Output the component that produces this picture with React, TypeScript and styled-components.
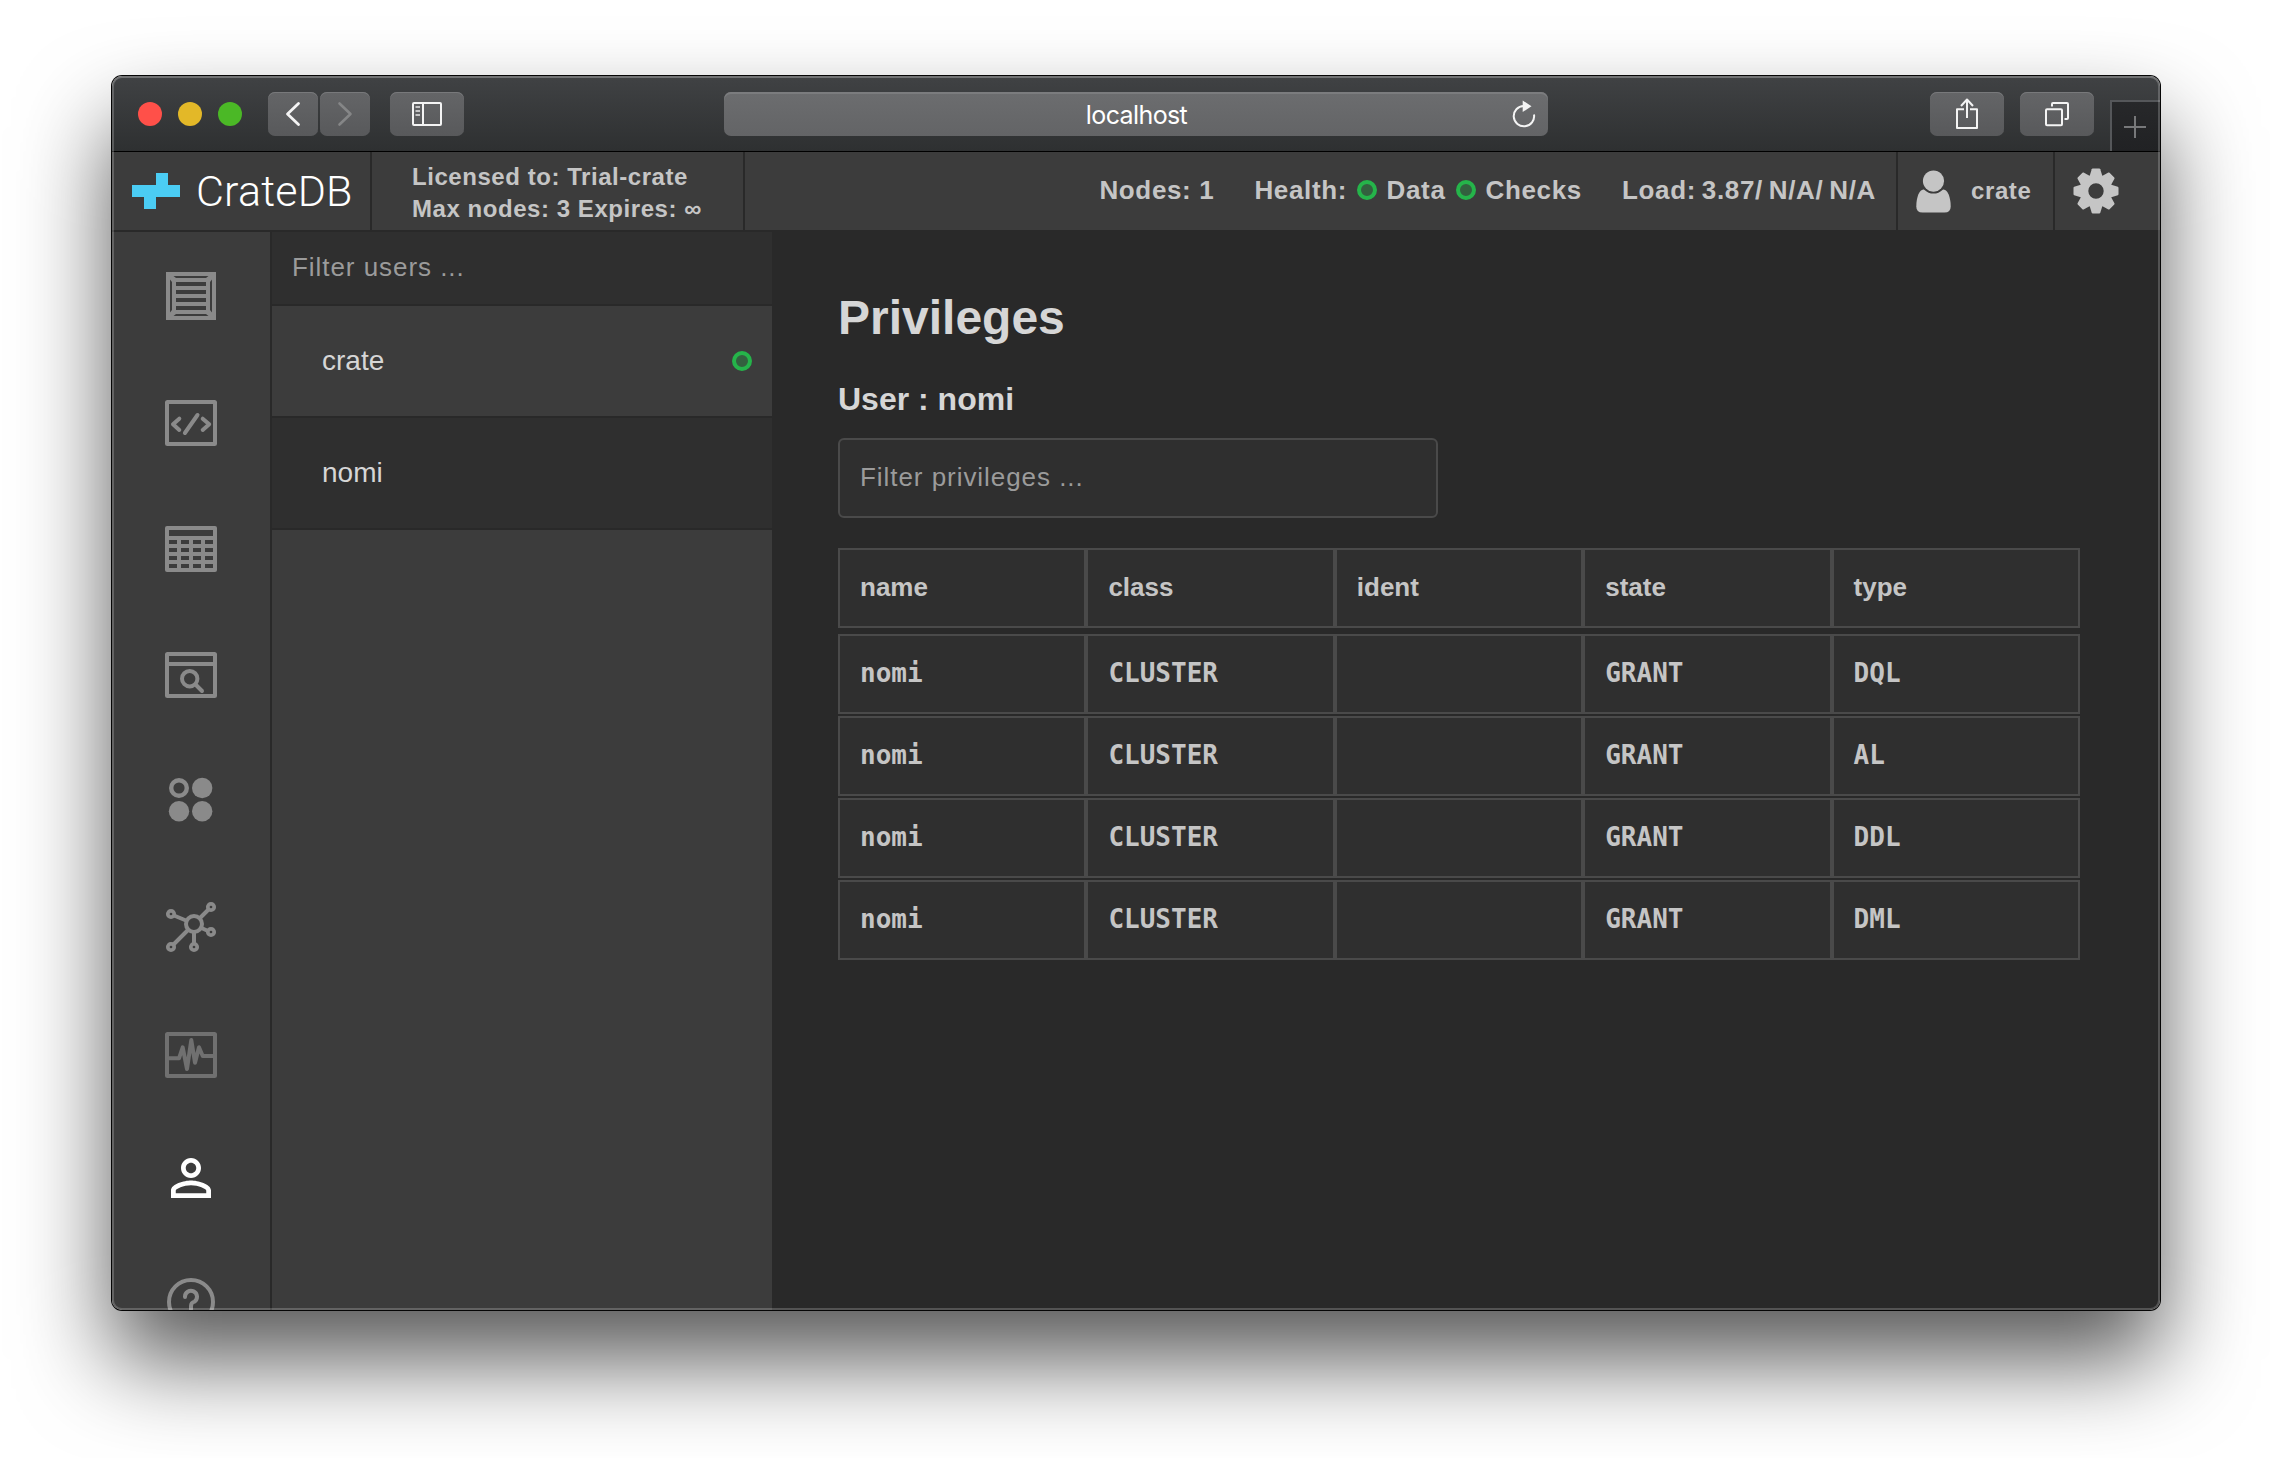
import React from "react";
import styled, { createGlobalStyle } from "styled-components";

const sans = `"Liberation Sans", Arial, Helvetica, sans-serif`;
const mono = `"DejaVu Sans Mono", Menlo, monospace`;

const c = {
  line: "#292929",
  bar: "#3c3c3c",
  field: "#2f2f2f",
  page: "#292929",
  cellLine: "#4a4a4a",
  text: "#c5c5c5",
  bright: "#d6d6d6",
  muted: "#9b9b9b",
  icon: "#8a8a8a",
  green: "#25b44a",
};

const GlobalStyle = createGlobalStyle`
  *, *::before, *::after { box-sizing: border-box; }
  html, body { margin: 0; background: #fff; }
  body { font-family: ${sans}; color: ${c.text}; }
`;

const Desktop = styled.div`
  width: 2272px;
  height: 1458px;
  padding: 76px 112px 148px;
  overflow: hidden;
  background: #fff;
`;

const Window = styled.div`
  position: relative;
  display: flex;
  flex-direction: column;
  height: 1234px;
  border-radius: 10px;
  box-shadow: 0 0 0 1px #050505, 0 50px 92px rgba(0, 0, 0, 0.66);
`;

const WindowBody = styled.div`
  display: flex;
  flex-direction: column;
  height: 100%;
  border-radius: 10px;
  overflow: hidden;
`;

const WindowRim = styled.div`
  position: absolute;
  inset: 0;
  border-radius: 10px;
  pointer-events: none;
  box-shadow: inset 0 0 0 2px rgba(255, 255, 255, 0.2), inset 0 2px 0 rgba(255, 255, 255, 0.08);
`;

const Titlebar = styled.div`
  display: flex;
  align-items: flex-start;
  height: 76px;
  padding: 16px 0 0 26px;
  background: linear-gradient(#404244, #2e3031);
  border-bottom: 1px solid #000;
`;

const Lights = styled.div`
  display: flex;
  gap: 16px;
  margin: 10px 26px 0 0;
`;

const Light = styled.span<{ $color: string }>`
  width: 24px;
  height: 24px;
  border-radius: 50%;
  background: ${(p) => p.$color};
`;

const BarButton = styled.button<{ $wide?: boolean; $gap?: number }>`
  display: flex;
  flex: none;
  width: ${(p) => (p.$wide ? 74 : 50)}px;
  height: 44px;
  margin: 0 ${(p) => p.$gap ?? 0}px 0 0;
  padding: 0;
  border: 0;
  border-radius: 7px;
  background: linear-gradient(#646567, #58595b);
  box-shadow: inset 0 1px 0 #78797b;
`;

const Address = styled.div`
  display: grid;
  grid-template-columns: 46px 1fr 46px;
  align-items: center;
  width: 824px;
  height: 44px;
  margin-left: 260px;
  margin-right: 382px;
  border-radius: 7px;
  background: linear-gradient(#6c6d6f, #636466);
  box-shadow: inset 0 2px 0 #7b7c7e;
  color: #fff;
  font: 25px/44px Inter, Roboto, sans-serif;
  letter-spacing: -0.6px;
  text-align: center;
`;

const AddressText = styled.span`
  grid-column: 2;
  padding: 1px 0 0 1px;
`;

const NewTab = styled.div`
  display: flex;
  flex: 1;
  height: 51px;
  margin: 8px 0 0 16px;
  border: 2px solid #55575a;
  border-width: 2px 0 0 2px;
  background: linear-gradient(#27282a, #212224);
`;

const Header = styled.header`
  display: flex;
  flex: none;
  height: 80px;
  background: ${c.bar};
  border-bottom: 2px solid ${c.line};
  font-weight: 700;
  white-space: nowrap;
`;

const Brand = styled.div`
  display: flex;
  align-items: center;
  width: 260px;
  padding-left: 20px;
  border-right: 2px solid ${c.line};
`;

const BrandName = styled.span`
  margin-left: 16px;
  color: #fff;
  font: 300 43px/78px Roboto, sans-serif;
  letter-spacing: 0.2px;
`;

const License = styled.div`
  width: 373px;
  padding: 9px 0 0 40px;
  border-right: 2px solid ${c.line};
  font-size: 24px;
  line-height: 32px;
  letter-spacing: 0.55px;
`;

const Stats = styled.div`
  display: flex;
  flex: 1;
  align-items: center;
  justify-content: flex-end;
  gap: 40px;
  padding: 0 20px 2px 0;
  font-size: 26px;
  letter-spacing: 0.65px;
`;

const Stat = styled.span<{ $tight?: boolean }>`
  display: flex;
  align-items: center;
  white-space: pre;
  word-spacing: ${(p) => (p.$tight ? "-2px" : "0")};
`;

const Ring = styled.span<{ $left?: number; $right?: number }>`
  width: 20px;
  height: 20px;
  margin: 0 ${(p) => p.$right ?? 0}px 0 ${(p) => p.$left ?? 0}px;
  border: 4px solid ${c.green};
  border-radius: 50%;
  background: #33613f;
`;

const Account = styled.div`
  display: flex;
  align-items: center;
  gap: 20px;
  width: 159px;
  padding-left: 18px;
  border-left: 2px solid ${c.line};
  border-right: 2px solid ${c.line};
  font-size: 24px;
  letter-spacing: 0.6px;
`;

const Settings = styled.div`
  display: flex;
  align-items: center;
  width: 105px;
  padding-left: 18px;
`;

const Body = styled.div`
  display: flex;
  flex: 1;
  min-height: 0;
`;

const Nav = styled.nav`
  flex: none;
  width: 160px;
  overflow: hidden;
  background: ${c.bar};
  border-right: 2px solid ${c.line};
`;

const NavItem = styled.a<{ $tone?: string }>`
  display: flex;
  align-items: center;
  justify-content: center;
  height: 126px;
  color: ${(p) => p.$tone ?? c.icon};
`;

const Users = styled.aside`
  flex: none;
  width: 500px;
  background: ${c.bar};
`;

const UserFilter = styled.input`
  display: block;
  width: 100%;
  height: 74px;
  padding: 0 20px 2px;
  border: 0;
  border-bottom: 2px solid ${c.line};
  background: ${c.field};
  font: 26px ${sans};
  letter-spacing: 0.95px;
  &::placeholder { color: ${c.muted}; opacity: 1; }
`;

const UserRow = styled.div<{ $active?: boolean }>`
  display: flex;
  align-items: center;
  justify-content: space-between;
  height: 112px;
  padding: 0 20px 1px 50px;
  border-bottom: 2px solid ${c.line};
  background: ${(p) => (p.$active ? c.field : c.bar)};
  color: ${c.bright};
  font-size: 28px;
`;

const Main = styled.main`
  flex: 1;
  padding: 58px 80px 0 66px;
  background: ${c.page};
`;

const Title = styled.h1`
  margin: 0 0 35px;
  color: ${c.bright};
  font-size: 48px;
  line-height: 56px;
`;

const Subtitle = styled.h2`
  margin: 0 0 21px;
  color: ${c.bright};
  font-size: 32px;
  line-height: 36px;
`;

const PrivilegeFilter = styled.input`
  display: block;
  width: 600px;
  height: 80px;
  margin-bottom: 30px;
  padding: 0 20px 2px;
  border: 2px solid ${c.cellLine};
  border-radius: 6px;
  background: ${c.field};
  font: 26px ${sans};
  letter-spacing: 0.95px;
  &::placeholder { color: ${c.muted}; opacity: 1; }
`;

const Row = styled.div<{ $head?: boolean }>`
  display: grid;
  grid-template-columns: repeat(5, 1fr);
  height: 80px;
  margin-bottom: ${(p) => (p.$head ? 6 : 2)}px;
  font: 700 26px ${(p) => (p.$head ? sans : mono)};
`;

const Cell = styled.div`
  display: flex;
  align-items: center;
  padding: 0 20px 2px;
  border: 2px solid ${c.cellLine};
  background: ${c.field};
`;

/* Every navigation icon is drawn on a 64-unit canvas. */
const NavIcon = ({ children }: { children: React.ReactNode }) => (
  <svg width="64" height="64" viewBox="0 0 64 64" fill="none" stroke="currentColor" strokeWidth="4" strokeLinecap="round" strokeLinejoin="round">
    {children}
  </svg>
);

const Frame = () => <rect x="2" y="2" width="48" height="42" rx="0.5" />;

const CrateIcon = () => (
  <NavIcon>
    <g transform="translate(7 9)" stroke="none">
      <rect width="50" height="48" fill="currentColor" />
      <g fill={c.bar}>
        <path d="M7.5 4h35l-2.500 2h-30zM7.500 44h35l-2.500-2h-30zM4 7.500v33l2-2.500v-28zM46 7.500v33l-2-2.500v-28z" />
        {[10, 18, 26, 34].map((y) => <rect key={y} x="10" y={y} width="30" height="4" />)}
      </g>
    </g>
  </NavIcon>
);

const CodeIcon = () => (
  <NavIcon>
    <g transform="translate(6 11)">
      <Frame />
      <path d="M14.300 18.700 8 24.300 14.300 30M32.500 15 19.900 33M37.700 18.700 44.200 24.300 37.700 30" />
    </g>
  </NavIcon>
);

const TableIcon = () => (
  <NavIcon>
    <g transform="translate(6 11)" stroke="none">
      <rect width="52" height="46" rx="2" fill="currentColor" />
      <g fill={c.bar}>
        <rect x="4" y="4" width="44" height="6" />
        {[14, 22, 30, 38].map((y) => [4, 16, 28, 40].map((x) => <rect key={`${x}-${y}`} x={x} y={y} width="8" height="4" />))}
      </g>
    </g>
  </NavIcon>
);

const BrowseIcon = () => (
  <NavIcon>
    <g transform="translate(6 11)">
      <Frame />
      <path d="M3 12h46" strokeLinecap="butt" />
      <circle cx="24.700" cy="26.700" r="7.700" />
      <path d="m30.500 32.500 6.500 6.500" />
    </g>
  </NavIcon>
);

const ShardsIcon = () => (
  <NavIcon>
    <g transform="translate(10 11)">
      <circle cx="10" cy="10" r="7.800" strokeWidth="4.400" />
      <g fill="currentColor" stroke="none">
        <circle cx="33.200" cy="10" r="10.200" />
        <circle cx="10" cy="33.300" r="10.200" />
        <circle cx="33.200" cy="33.300" r="10.200" />
      </g>
    </g>
  </NavIcon>
);

const ClusterIcon = () => (
  <NavIcon>
    <g transform="translate(7 9)">
      <circle cx="28" cy="22" r="8" />
      <path d="M8 13.500 20 18.500M42.500 7.500 34 16M42 29l-6.500-3M28 31v11M7.500 42.500 22 28" strokeLinecap="butt" />
      {[[5, 12], [45, 5], [45, 30], [28, 45], [5, 45]].map(([x, y]) => <circle key={`${x}-${y}`} cx={x} cy={y} r="3.200" strokeWidth="3.700" />)}
    </g>
  </NavIcon>
);

const MonitorIcon = () => (
  <NavIcon>
    <g transform="translate(6 13)">
      <Frame />
      <path d="M4 26.300h10l3.700-11L22 37l4.300-29L30 30.700l4-15.400 3.700 8.700H48" />
    </g>
  </NavIcon>
);

const PersonIcon = () => (
  <NavIcon>
    <path
      transform="translate(2 3) scale(2.500)"
      fill="currentColor"
      stroke="none"
      d="M12 5.900c1.160 0 2.100.94 2.100 2.100s-.94 2.100-2.100 2.100S9.900 9.160 9.900 8s.94-2.100 2.100-2.100m0 9c2.970 0 6.100 1.460 6.100 2.100v1.100H5.900V17c0-.64 3.130-2.100 6.100-2.100M12 4C9.790 4 8 5.790 8 8s1.790 4 4 4 4-1.790 4-4-1.790-4-4-4zm0 9c-2.670 0-8 1.340-8 4v3h16v-3c0-2.660-5.330-4-8-4z"
    />
  </NavIcon>
);

const HelpIcon = () => (
  <NavIcon>
    <circle cx="32" cy="31" r="22" />
    <path d="M26 26a6 6 0 1 1 9.500 4.600Q32 31.500 32 35v3" />
    <circle cx="32" cy="43" r="0.500" />
  </NavIcon>
);

const Gear = () => (
  <svg width="46" height="46" viewBox="-23 -23 46 46" fill={c.text}>
    <path
      fillRule="evenodd"
      d="M0-16.500a16.500 16.500 0 1 1 0 33a16.500 16.500 0 1 1 0-33zM0-7.700a7.700 7.700 0 1 0 0 15.400a7.700 7.700 0 1 0 0-15.400z"
    />
    {[0, 45, 90, 135, 180, 225, 270, 315].map((a) => (
      <path key={a} transform={`rotate(${a})`} d="M-6.500-14.500-4.300-21.800Q-4-22.500-3.300-22.500H3.300Q4-22.500 4.300-21.800L6.500-14.500z" />
    ))}
  </svg>
);

const Avatar = () => (
  <svg width="35" height="43" viewBox="0 0 35 43" fill={c.text}>
    <path d="M7.500 19.500H27.500C32 19.500 34.700 28 34.700 36.500Q34.700 42.500 28.500 42.500H6.500Q.3 42.500.3 36.500C.3 28 3 19.500 7.500 19.500z" />
    <circle cx="17.500" cy="11" r="11.600" fill="none" stroke={c.bar} strokeWidth="2" />
    <circle cx="17.500" cy="11" r="10.600" />
  </svg>
);

const navigation: { key: string; icon: React.ReactNode; tone?: string }[] = [
  { key: "overview", icon: <CrateIcon /> },
  { key: "console", icon: <CodeIcon /> },
  { key: "tables", icon: <TableIcon /> },
  { key: "views", icon: <BrowseIcon /> },
  { key: "shards", icon: <ShardsIcon /> },
  { key: "cluster", icon: <ClusterIcon /> },
  { key: "monitoring", icon: <MonitorIcon />, tone: "#707070" },
  { key: "privileges", icon: <PersonIcon />, tone: "#fff" },
  { key: "help", icon: <HelpIcon /> },
];

const columns = ["name", "class", "ident", "state", "type"];
const privileges = ["DQL", "AL", "DDL", "DML"].map((type) => ["nomi", "CLUSTER", "", "GRANT", type]);

const BrowserBar = () => (
  <Titlebar>
    <Lights>
      <Light $color="#ff5049" />
      <Light $color="#e3b828" />
      <Light $color="#4bb826" />
    </Lights>
    <BarButton $gap={2}>
      <svg width="50" height="44" fill="none" stroke="#f4f4f4" strokeWidth="2.800" strokeLinecap="round" strokeLinejoin="round">
        <path d="M30.500 11.500 19.500 22l11 10.500" />
      </svg>
    </BarButton>
    <BarButton $gap={20}>
      <svg width="50" height="44" fill="none" stroke="#858687" strokeWidth="2.600" strokeLinecap="round" strokeLinejoin="round">
        <path d="M19.500 11.500 30.500 22l-11 10.500" />
      </svg>
    </BarButton>
    <BarButton $wide>
      <svg width="74" height="44" fill="none" stroke="#f4f4f4" strokeWidth="2">
        <rect x="23" y="11" width="28" height="22" rx="1" />
        <path d="M33 11v22" />
        <path d="M25.500 15h4.500M25.500 19h4.500M25.500 23h4.500" stroke="#c4c4c5" strokeWidth="1.800" />
      </svg>
    </BarButton>
    <Address>
      <AddressText>localhost</AddressText>
      <svg width="46" height="44" fill="none" stroke="#f4f4f4" strokeWidth="2">
        <path d="M32 21.500A10.200 10.200 0 1 1 21.700 12.900" />
        <path d="M20.700 7.500 29.500 13.200l-8.800 5.800z" fill="#f4f4f4" stroke="none" />
      </svg>
    </Address>
    <BarButton $wide $gap={16}>
      <svg width="74" height="44" fill="none" stroke="#f4f4f4" strokeWidth="2" strokeLinejoin="round">
        <path d="M34 17.300h-7v18.700h20V17.300h-7M37 26V8M31 14l6-6.500 6 6.500" />
      </svg>
    </BarButton>
    <BarButton $wide>
      <svg width="74" height="44" fill="none" stroke="#f4f4f4" strokeWidth="2">
        <rect x="26" y="17.300" width="16" height="16" rx="1" />
        <path d="M32 14.500V12q0-1 1-1h14q1 0 1 1v14q0 1-1 1h-2.500" />
      </svg>
    </BarButton>
    <NewTab>
      <svg width="46" height="48" stroke="#77787a" strokeWidth="2">
        <path d="M12 25h22M23 14v22" />
      </svg>
    </NewTab>
  </Titlebar>
);

const AppHeader = () => (
  <Header>
    <Brand>
      <svg width="48" height="36" fill="#4bcdf4">
        <path d="M24 0h12v12h12v12H24v12H12V24H0V12h24z" />
      </svg>
      <BrandName>CrateDB</BrandName>
    </Brand>
    <License>
      <div>Licensed to: Trial-crate</div>
      <div>Max nodes: 3 Expires: ∞</div>
    </License>
    <Stats>
      <Stat>Nodes: 1</Stat>
      <Stat>
        Health:
        <Ring $left={10} $right={9.5} />
        Data
        <Ring $left={10} $right={10} />
        Checks
      </Stat>
      <Stat $tight>Load: 3.87/ N/A/ N/A</Stat>
    </Stats>
    <Account>
      <Avatar />
      crate
    </Account>
    <Settings>
      <Gear />
    </Settings>
  </Header>
);

export default function App() {
  return (
    <Desktop>
      <GlobalStyle />
      <Window>
        <WindowBody>
          <BrowserBar />
          <AppHeader />
          <Body>
            <Nav>
              {navigation.map((item) => (
                <NavItem key={item.key} $tone={item.tone}>{item.icon}</NavItem>
              ))}
            </Nav>
            <Users>
              <UserFilter placeholder="Filter users ..." />
              <UserRow>
                crate
                <Ring />
              </UserRow>
              <UserRow $active>nomi</UserRow>
            </Users>
            <Main>
              <Title>Privileges</Title>
              <Subtitle>User : nomi</Subtitle>
              <PrivilegeFilter placeholder="Filter privileges ..." />
              <Row $head>
                {columns.map((name) => <Cell key={name}>{name}</Cell>)}
              </Row>
              {privileges.map((values) => (
                <Row key={values[4]}>
                  {values.map((value, i) => <Cell key={columns[i]}>{value}</Cell>)}
                </Row>
              ))}
            </Main>
          </Body>
        </WindowBody>
        <WindowRim />
      </Window>
    </Desktop>
  );
}
